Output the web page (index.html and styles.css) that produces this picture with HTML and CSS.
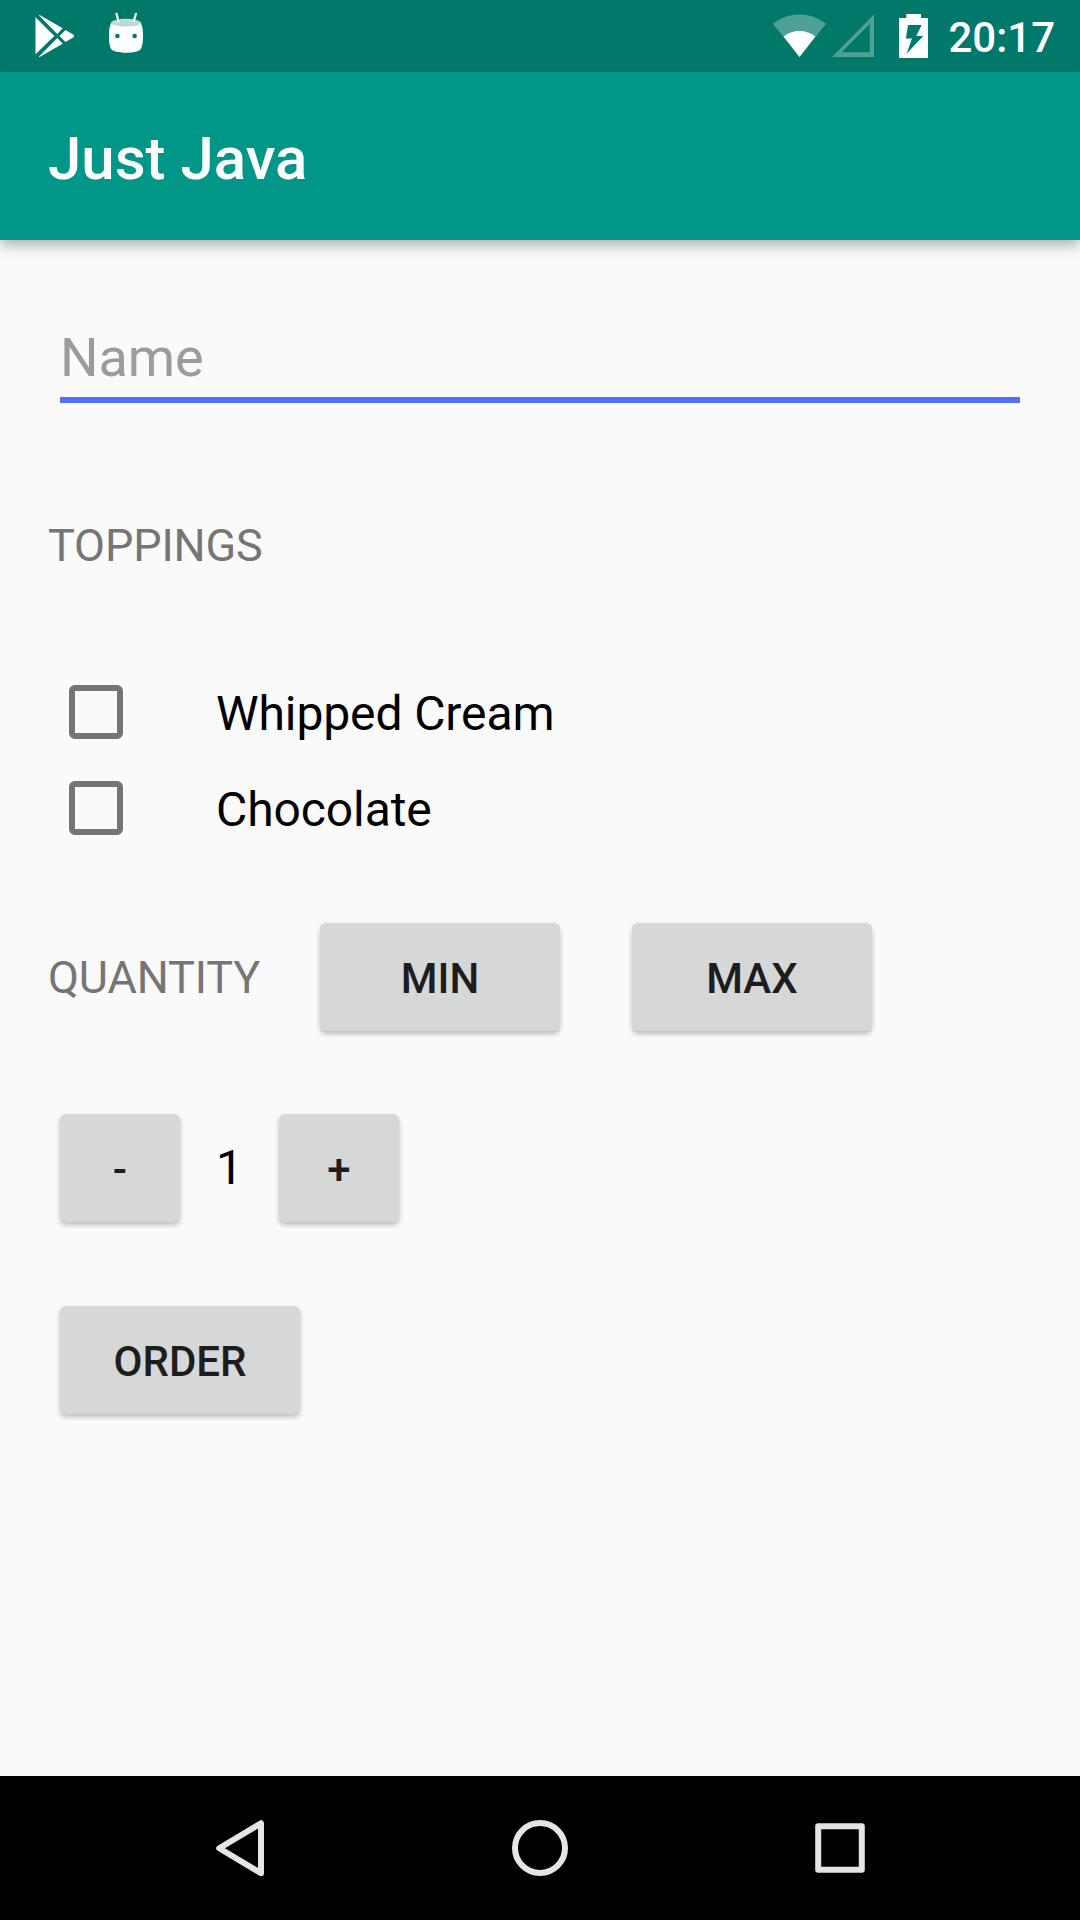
FILE: index.html
```html
<!DOCTYPE html>
<html lang="en">
<head>
  <meta charset="UTF-8">
  <meta name="viewport" content="width=device-width, initial-scale=1.0">
  <title>Just Java</title>
  <link rel="stylesheet" href="styles.css">
</head>
<body>
  <div class="status-bar">
    <div class="status-group">
      <!-- Play Store -->
      <svg class="icon-play" width="40" height="44" viewBox="35 14 40 44" fill="#fff">
        <path d="M35.5 17.2L54.3 36L35.5 54.3Z"/>
        <path d="M38.8 15.2Q39.5 14.6 40.5 15.4L62.7 28.3L57.2 33.9Z"/>
        <path d="M38.8 56.8Q39.5 57.4 40.5 56.6L62.7 43.7L57.2 38.1Z"/>
        <path d="M65.5 30L72.8 34.3Q75.2 36 72.8 37.7L65.5 42L59.5 36Z"/>
      </svg>
      <!-- Android head -->
      <svg class="icon-android" width="36" height="42" viewBox="108 12 36 42">
        <path d="M111.6 22C109 26 109 33 109 36C109 43 109.8 48.5 112.5 50.3C117 53.6 135 53.6 139.5 50.3C142.2 48.5 143 43 143 36C143 33 143 26 140.4 22Z" fill="#fff"/>
        <ellipse cx="126" cy="22.7" rx="14.6" ry="3.9" fill="#bbdbd7"/>
        <path d="M116.5 13.8L118.4 21.3M135.9 13.8L133.8 21.3" stroke="#fff" stroke-width="2.2" stroke-linecap="round"/>
        <circle cx="117.4" cy="36" r="2.3" fill="#00796b"/>
        <circle cx="134.6" cy="36" r="2.3" fill="#00796b"/>
      </svg>
    </div>
    <div class="status-group">
      <!-- Wifi -->
      <svg width="54" height="44" viewBox="773 14 54 44">
        <path d="M799.5 57L773 23.8Q784.5 14.4 799.5 14.4Q814.5 14.4 826 23.8Z" fill="#4da197"/>
        <path d="M799.5 57L783.6 36.5Q790.5 31 799.5 31Q808.5 31 815.4 36.5Z" fill="#fff"/>
      </svg>
      <!-- Signal -->
      <svg class="icon-signal" width="43" height="44" viewBox="832 14 43 44">
        <path d="M832 57L874 14.6V57ZM841.5 52.3H869.8V24Z" fill="#4da197" fill-rule="evenodd"/>
      </svg>
      <!-- Battery -->
      <svg class="icon-battery" width="29" height="44" viewBox="899 14 29 44">
        <path d="M906.3 14H921V18H928V58H899V18H906.3ZM908 25L905.9 38.6H912L906.7 53.4L923.3 36H916.3L921.7 25Z" fill="#fff" fill-rule="evenodd"/>
      </svg>
      <span class="clock">20:17</span>
    </div>
  </div>

  <header>
    <h1>Just Java</h1>
  </header>

  <main>
    <input class="name-field" type="text" placeholder="Name" aria-label="Name">

    <h2>Toppings</h2>
    <div class="toppings">
      <label class="topping">
        <input type="checkbox">
        <span>Whipped Cream</span>
      </label>
      <label class="topping">
        <input type="checkbox">
        <span>Chocolate</span>
      </label>
    </div>

    <div class="quantity-row">
      <h2>Quantity</h2>
      <button class="btn">Min</button>
      <button class="btn btn-max">Max</button>
    </div>

    <div class="stepper">
      <button class="btn btn-small">-</button>
      <span class="quantity">1</span>
      <button class="btn btn-small">+</button>
    </div>

    <button class="btn btn-order">Order</button>
  </main>

  <nav class="nav-bar">
    <svg width="60" height="60" viewBox="210 1818 60 60" fill="none" stroke="#e5e5e5" stroke-width="6" stroke-linejoin="round">
      <path d="M219.2 1848.2L261 1823.2V1873.2Z"/>
    </svg>
    <svg width="60" height="60" viewBox="0 0 60 60" fill="none" stroke="#e5e5e5" stroke-width="6">
      <circle cx="30" cy="30" r="25"/>
    </svg>
    <svg width="60" height="60" viewBox="0 0 60 60" fill="none" stroke="#e5e5e5" stroke-width="6" stroke-linejoin="round">
      <path d="M8.2 8.2H51.8V51.8H8.2Z"/>
    </svg>
  </nav>
</body>
</html>
```

FILE: styles.css
```css
* {
  box-sizing: border-box;
}

body {
  margin: 0;
  height: 1920px;
  display: flex;
  flex-direction: column;
  font-family: Roboto, sans-serif;
  background-color: #fafafa;
  color: #000;
}

svg {
  display: block;
}

/* Status bar */
.status-bar {
  height: 72px;
  padding: 0 25px 0 35px;
  display: flex;
  justify-content: space-between;
  background-color: #00796b;
}

.status-group {
  display: flex;
  align-items: center;
}

.icon-android {
  margin-left: 33px;
  margin-bottom: 6px;
}

.icon-signal {
  margin-left: 5px;
}

.icon-battery {
  margin-left: 24px;
}

.clock {
  margin-left: 20px;
  padding-top: 3px;
  color: #fff;
  font-size: 42px;
  font-weight: 500;
  line-height: 69px;
}

/* App bar */
header {
  height: 168px;
  padding: 5px 48px 0;
  background-color: #009688;
  box-shadow: 0 6px 12px rgba(0, 0, 0, 0.28);
}

h1 {
  margin: 0;
  color: #fff;
  font-size: 60px;
  font-weight: 500;
  line-height: 163px;
}

/* Form */
main {
  flex: 1;
  padding: 85px 48px 0;
}

.name-field {
  display: block;
  width: 960px;
  height: 78px;
  margin: 0 12px;
  padding: 0 0 8px;
  border: none;
  border-bottom: 6px solid #536dfe;
  background: none;
  outline: none;
  font-family: inherit;
  font-size: 54px;
  letter-spacing: -0.1px;
}

.name-field::placeholder {
  color: #9b9b9b;
}

h2 {
  margin: 116px 0 0;
  color: #757575;
  font-size: 45px;
  font-weight: 400;
  line-height: 54px;
  letter-spacing: -0.12px;
  text-transform: uppercase;
}

.toppings {
  margin-top: 91px;
}

.topping {
  height: 96px;
  padding-left: 21px;
  display: flex;
  align-items: center;
  font-size: 48px;
  letter-spacing: -0.1px;
}

.topping input {
  appearance: none;
  width: 54px;
  height: 54px;
  margin: 0 93px 0 0;
  border: 6px solid #757575;
  border-radius: 6px;
}

.topping span {
  padding-top: 3px;
}

.quantity-row {
  margin-top: 67px;
  display: flex;
}

.quantity-row h2 {
  width: 272px;
  margin: 0;
  line-height: 110px;
  height: 108px;
}

.btn {
  width: 240px;
  height: 108px;
  padding: 3px 0 0;
  border: none;
  border-radius: 6px;
  background-color: #d6d7d7;
  box-shadow: 0 3px 5px rgba(0, 0, 0, 0.25);
  color: #1d1d1d;
  font-family: inherit;
  font-size: 42px;
  font-weight: 500;
  text-transform: uppercase;
}

.btn-max {
  margin-left: 72px;
}

.stepper {
  margin: 83px 12px 0;
  display: flex;
}

.btn-small {
  width: 120px;
}

.quantity {
  margin: 0 36px;
  font-size: 48px;
  line-height: 108px;
}

.btn-order {
  display: block;
  margin: 84px 12px 0;
}

/* Navigation bar */
.nav-bar {
  height: 144px;
  display: flex;
  align-items: center;
  justify-content: center;
  gap: 240px;
  background-color: #000;
}
```
